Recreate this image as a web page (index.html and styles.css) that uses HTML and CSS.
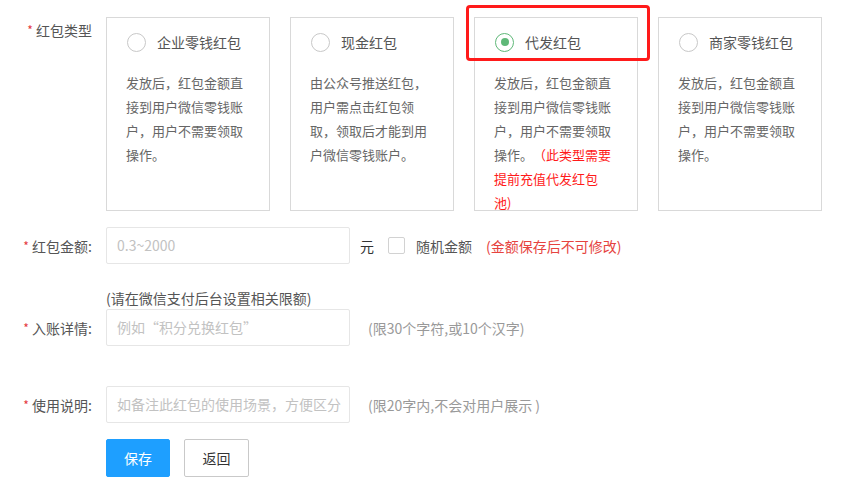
FILE: index.html
```html
<!DOCTYPE html>
<html lang="zh-CN">
<head>
<meta charset="utf-8">
<title>红包设置</title>
<link rel="stylesheet" href="styles.css">
</head>
<body>
<div class="form">
  <div class="row row-type">
    <div class="label"><span class="star">*</span> 红包类型</div>
    <div class="cards">
      <div class="card">
        <div class="card-head"><span class="radio"></span><span class="title">企业零钱红包</span></div>
        <div class="desc">发放后，红包金额直接到用户微信零钱账户，用户不需要领取操作。</div>
      </div>
      <div class="card">
        <div class="card-head"><span class="radio"></span><span class="title">现金红包</span></div>
        <div class="desc">由公众号推送红包，用户需点击红包领取，领取后才能到用户微信零钱账户。</div>
      </div>
      <div class="card">
        <div class="card-head"><span class="radio checked"></span><span class="title">代发红包</span></div>
        <div class="desc">发放后，红包金额直接到用户微信零钱账户，用户不需要领取操作。<span class="red">（此类型需要提前充值代发红包池)</span></div>
        <div class="highlight"></div>
      </div>
      <div class="card">
        <div class="card-head"><span class="radio"></span><span class="title">商家零钱红包</span></div>
        <div class="desc">发放后，红包金额直接到用户微信零钱账户，用户不需要领取操作。</div>
      </div>
    </div>
  </div>

  <div class="row row-amount">
    <div class="label"><span class="star">*</span> 红包金额:</div>
    <div class="input placeholder">0.3~2000</div>
    <span class="unit">元</span>
    <span class="checkbox"></span>
    <span class="check-text">随机金额</span>
    <span class="warn">(金额保存后不可修改)</span>
  </div>

  <div class="row row-note">
    <div class="label"></div>
    <div class="note">(请在微信支付后台设置相关限额)</div>
  </div>

  <div class="row row-detail">
    <div class="label"><span class="star">*</span> 入账详情:</div>
    <div class="input placeholder">例如“积分兑换红包”</div>
    <span class="tip">(限30个字符,或10个汉字)</span>
  </div>

  <div class="row row-usage">
    <div class="label"><span class="star">*</span> 使用说明:</div>
    <div class="input placeholder">如备注此红包的使用场景，方便区分</div>
    <span class="tip">(限20字内,不会对用户展示 )</span>
  </div>

  <div class="row row-buttons">
    <div class="label"></div>
    <button class="btn btn-primary">保存</button>
    <button class="btn btn-default">返回</button>
  </div>
</div>
</body>
</html>
```

FILE: styles.css
```css
* { box-sizing: border-box; }
html, body { margin: 0; padding: 0; background: #fff; }
body {
  font-family: "Noto Sans CJK SC", "Liberation Sans", sans-serif;
  font-size: 14px;
  color: #555;
  text-spacing-trim: space-all;
}
.form { padding-top: 17px; }
.row { display: flex; align-items: center; }
.label {
  width: 92px;
  flex: none;
  text-align: right;
  line-height: 20px;
  color: #555;
  margin-right: 14px;
  white-space: nowrap;
}
.star { color: #e4393c; font-size: 12px; vertical-align: 1px; }
.row-type { align-items: flex-start; }
.row-type .label { padding-top: 3px; }
.cards { display: flex; gap: 20px; }
.card {
  position: relative;
  width: 164px;
  height: 194px;
  border: 1px solid #d9d9d9;
  padding: 13px 19px 0;
}
.card-head { display: flex; align-items: center; height: 22px; }
.radio {
  width: 19px; height: 19px;
  border: 1.5px solid #c8c8c8;
  border-radius: 50%;
  margin-left: 1px;
  margin-right: 11px;
  position: relative;
  flex: none;
}
.radio.checked { border-color: #5fb878; }
.radio.checked::after {
  content: "";
  position: absolute;
  left: 50%; top: 50%;
  width: 8px; height: 8px;
  margin: -4px 0 0 -4px;
  border-radius: 50%;
  background: #5fb878;
}
.title { font-size: 14px; line-height: 20px; color: #555; }
.desc {
  margin-top: 18px;
  width: 120px;
  font-size: 13px;
  line-height: 24px;
  color: #666;
  text-spacing-trim: space-all;
}
.red { color: #ff1a1a; }
.highlight {
  position: absolute;
  left: -9px; top: -13px;
  width: 184px; height: 56px;
  border: 3px solid #ff1a1a;
  border-radius: 4px;
}
.row-amount { margin-top: 16px; }
.input {
  width: 244px;
  height: 37px;
  border: 1px solid #e6e6e6;
  border-radius: 2px;
  padding: 0 10px;
  line-height: 35px;
  font-size: 14px;
  white-space: nowrap;
  overflow: hidden;
  flex: none;
}
.placeholder { color: #c2c2c2; }
.unit { margin-left: 10px; color: #333; }
.checkbox {
  width: 17px; height: 17px;
  border: 1px solid #d2d2d2;
  border-radius: 2px;
  margin-left: 14px;
}
.check-text { margin-left: 11px; color: #555; }
.warn { margin-left: 14px; color: #e64340; }
.row-note { margin-top: 24px; }
.note { line-height: 20px; color: #555; }
.row-detail { margin-top: 1px; }
.tip { margin-left: 18px; color: #999; }
.row-usage { margin-top: 40px; }
.row-buttons { margin-top: 16px; }
.btn {
  height: 38px;
  font-family: inherit;
  font-size: 14px;
  border-radius: 2px;
  padding: 0;
  cursor: pointer;
}
.btn-primary {
  width: 64px;
  background: #1e9fff;
  border: 1px solid #1e9fff;
  color: #fff;
}
.btn-default {
  width: 65px;
  margin-left: 14px;
  background: #fff;
  border: 1px solid #c9c9c9;
  color: #333;
}
```
